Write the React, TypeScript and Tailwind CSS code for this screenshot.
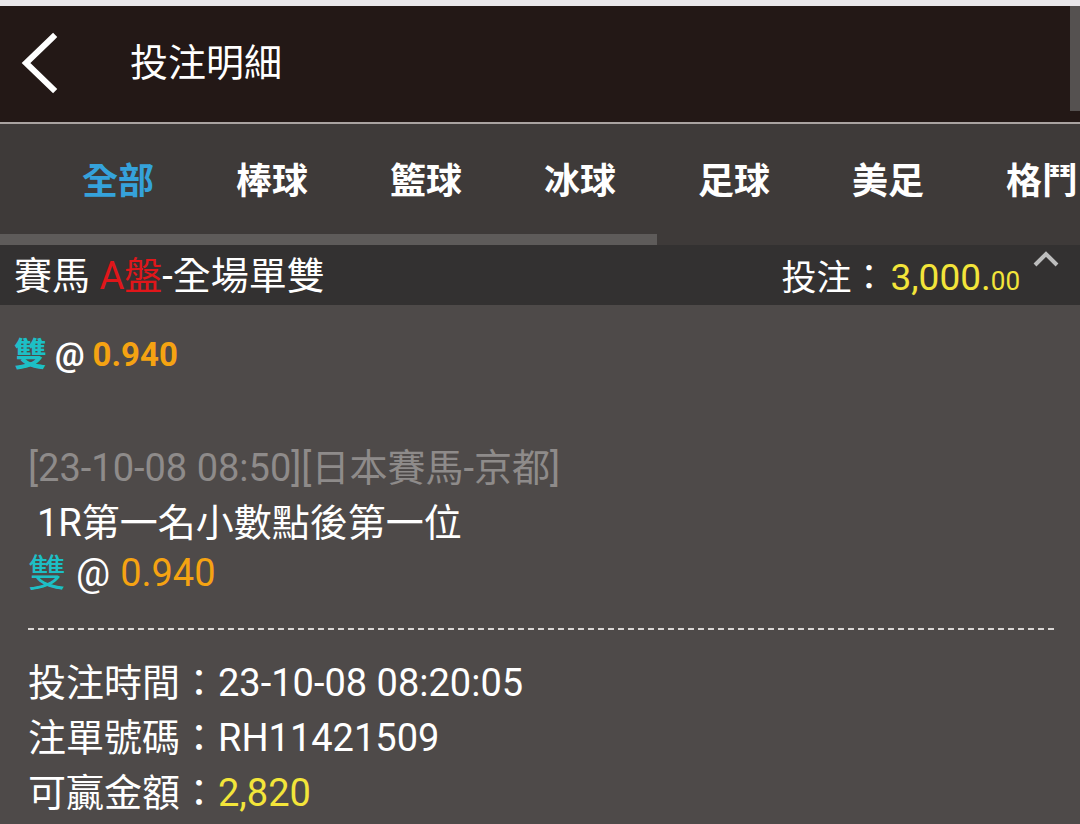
const tabs = ['全部', '棒球', '籃球', '冰球', '足球', '美足', '格鬥'];

const App = () => {
    return (
        <div className="w-[1080px] h-[824px] overflow-hidden flex flex-col bg-[#4e4a49] text-white font-['Roboto','Noto_Sans_CJK_TC',sans-serif]">
            {/* status strip */}
            <div className="h-[6px] bg-[#e9e7ea]" />

            {/* title bar */}
            <div className="h-[116px] flex bg-[#231816]">
                <div className="w-[120px] flex items-center">
                    <svg width="70" height="70" viewBox="0 0 70 70" className="ml-[4px]">
                        <polyline points="49,4 22,30 49,56" fill="none" stroke="#ffffff" strokeWidth="6" strokeLinecap="square" transform="translate(0,4)" />
                    </svg>
                </div>
                <div className="flex items-center ml-[10px] text-[38px] leading-none pb-[2px]">投注明細</div>
                <div className="ml-auto w-[10px] h-[105px] bg-[#555150]" />
            </div>
            <div className="h-[2px] bg-[#a9a3a1]" />

            {/* sport tabs */}
            <div className="h-[110px] flex items-center pl-[41px] pt-[6px] bg-[#3e3a39] overflow-hidden">
                {tabs.map((t, i) => (
                    <div
                        key={t}
                        className={`w-[154px] shrink-0 text-center text-[36px] font-bold leading-none ${i === 0 ? 'text-[#35a2db]' : 'text-white'}`}
                    >
                        {t}
                    </div>
                ))}
            </div>
            <div className="h-[11px] bg-[#3e3a39]">
                <div className="w-[657px] h-full bg-[#5e5b5a]" />
            </div>

            {/* section header */}
            <div className="h-[60px] flex items-center bg-[#333131] pl-[14px] pr-[18px]">
                <div className="text-[38px] leading-none pt-[2px]">
                    賽馬 <span className="text-[#e0161a]">A盤</span>-全場單雙
                </div>
                <div className="ml-auto flex items-baseline leading-none pt-[4px]">
                    <span className="text-[35px]">投注：</span>
                    <span className="text-[37px] text-[#f3e53a] ml-[4px]">3,000.</span>
                    <span className="text-[26px] text-[#f3e53a]">00</span>
                </div>
                <svg width="30" height="20" viewBox="0 0 30 20" className="ml-[12px] self-start mt-[4px]">
                    <polyline points="3,16 14,5 25,16" fill="none" stroke="#bdbdbd" strokeWidth="4" />
                </svg>
            </div>

            {/* body */}
            <div className="h-[98px] flex items-center pl-[14px] text-[33px] font-bold leading-none">
                <span className="text-[#1dbfc6]">雙</span>
                <span className="ml-[8px]">@</span>
                <span className="ml-[8px] text-[#f5a312]">0.940</span>
            </div>

            <div className="mt-[36px] pl-[28px] text-[38px] leading-none">
                <div className="h-[58px] flex items-center text-[#8e8b8a]">[23-10-08 08:50][日本賽馬-京都]</div>
                <div className="h-[52px] flex items-center pl-[9px]">1R第一名小數點後第一位</div>
                <div className="h-[48px] flex items-center">
                    <span className="text-[#1dbfc6]">雙</span>
                    <span className="ml-[10px]">@</span>
                    <span className="ml-[10px] text-[#f5a312]">0.940</span>
                </div>
            </div>

            <div className="mt-[31px] ml-[28px] mr-[25px] h-[2px] bg-[repeating-linear-gradient(to_right,#d9d6d4_0_6px,transparent_6px_10px)]" />

            <div className="mt-[26px] pl-[28px] text-[38px] leading-none">
                <div className="h-[54px] flex items-center">投注時間：23-10-08 08:20:05</div>
                <div className="h-[55px] flex items-center">注單號碼：RH11421509</div>
                <div className="h-[55px] flex items-center">
                    可贏金額：<span className="text-[#f3e53a]">2,820</span>
                </div>
            </div>
        </div>
    );
};

export default App;
